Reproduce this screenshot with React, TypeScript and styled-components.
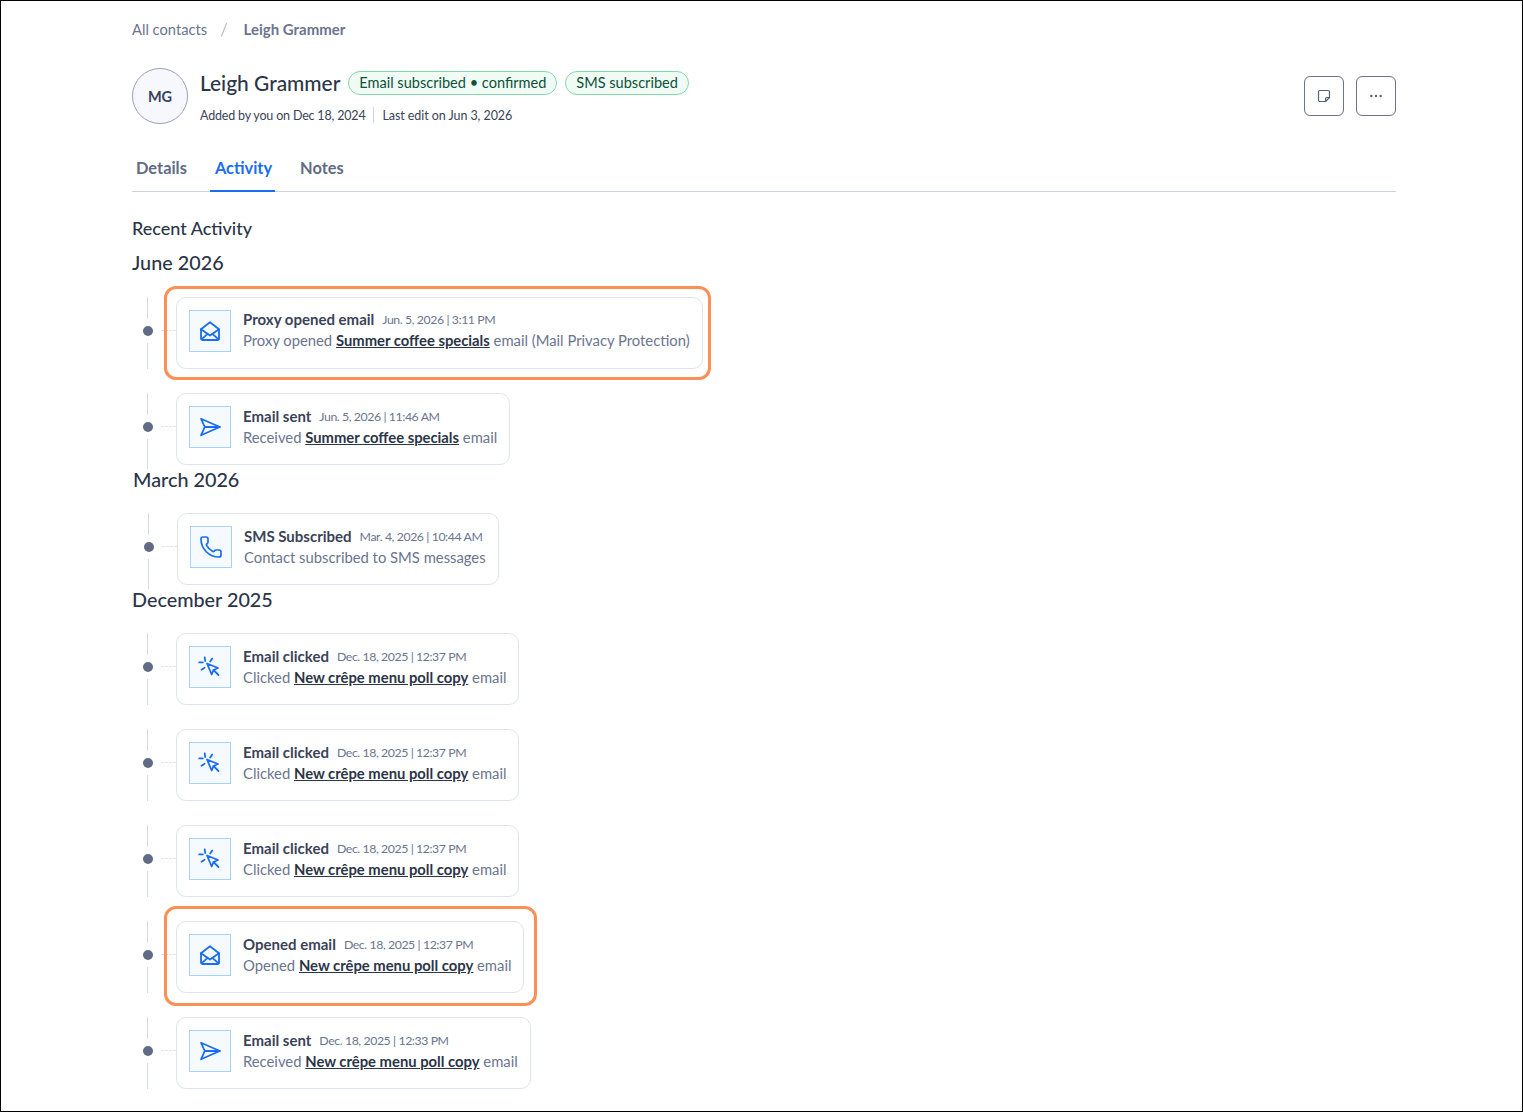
import React from "react";
import styled, { createGlobalStyle } from "styled-components";
import { Phone, Ellipsis } from "lucide-react";

const Global = createGlobalStyle`
  html, body { margin: 0; padding: 0; background: #fff; }
  * { box-sizing: border-box; }
  body { font-family: "Lato", "Liberation Sans", sans-serif; }
`;

const Page = styled.div`
  width: 1523px;
  height: 1112px;
  border: 1px solid #000;
  padding: 0 126px 0 131px;
  overflow: hidden;
  color: #2b3548;
`;

const Crumbs = styled.nav`
  display: flex;
  align-items: center;
  height: 30px;
  margin-top: 13px;
  font-size: 14.7px;
  color: #6b7490;
`;
const CrumbSep = styled.span`
  margin: 0 16px 0 13px;
  font-size: 17px;
  font-weight: 300;
  color: #8a91a8;
`;
const CrumbCurrent = styled.span`
  font-size: 15px;
  font-weight: 700;
`;

const Header = styled.header`
  display: flex;
  align-items: center;
  margin-top: 24px;
  height: 56px;
`;
const Avatar = styled.div`
  width: 56px;
  height: 56px;
  border-radius: 50%;
  border: 1px solid #99a1b8;
  background: #f6f8fd;
  display: flex;
  align-items: center;
  justify-content: center;
  font-size: 14.5px;
  font-weight: 700;
  color: #38425a;
`;
const HeaderText = styled.div`
  margin-left: 12px;
  flex: 1;
`;
const NameRow = styled.div`
  display: flex;
  align-items: center;
  gap: 8px;
`;
const Name = styled.h1`
  margin: 0;
  font-size: 20.9px;
  font-weight: 500;
  line-height: 28px;
  color: #2b3548;
`;
const Badge = styled.span`
  display: inline-flex;
  align-items: center;
  height: 24px;
  padding: 0 10px 1px;
  border: 1px solid #7fdca8;
  border-radius: 12px;
  background: #effbf4;
  font-size: 14.55px;
  color: #0d5238;
`;
const Meta = styled.div`
  display: flex;
  align-items: center;
  margin-top: 10px;
  font-size: 12.5px;
  letter-spacing: -0.18px;
  color: #3a4358;
`;
const MetaLast = styled.span`
  letter-spacing: -0.07px;
`;
const MetaDivider = styled.span`
  width: 1px;
  height: 16px;
  background: #cfd4e0;
  margin: 0 8px;
`;
const Actions = styled.div`
  display: flex;
  gap: 12px;
`;
const IconButton = styled.button`
  width: 40px;
  height: 40px;
  border-radius: 6px;
  border: 1px solid #6b7490;
  background: #fff;
  color: #56607a;
  display: flex;
  align-items: center;
  justify-content: center;
  padding: 0;
`;

const Tabs = styled.div`
  display: flex;
  margin-top: 28px;
  height: 40px;
  border-bottom: 1px solid #ccd1dc;
`;
const Tab = styled.div<{ $active?: boolean }>`
  padding: 3px 4px 0;
  height: 40px;
  font-size: 16.4px;
  line-height: 26px;
  font-weight: 700;
  color: ${(p) => (p.$active ? "#1a6cf0" : "#626b84")};
  border-bottom: 2px solid ${(p) => (p.$active ? "#1a6cf0" : "transparent")};
  &:first-child { margin-right: 19px; }
  &:nth-child(2) { padding: 3px 3px 0 5px; margin-right: 21px; }
`;

const SectionTitle = styled.h2`
  margin: 21px 0 0;
  font-size: 18px;
  line-height: 30px;
  font-weight: 500;
  color: #2b3548;
`;
const Month = styled.h3<{ $nudge?: boolean; $first?: boolean }>`
  margin: ${(p) => (p.$first ? "4px" : "-1px")} 0 ${(p) => (p.$first ? "20px" : "19px")} ${(p) => (p.$nudge ? "1px" : "0")};
  font-size: 19.8px;
  line-height: 30px;
  font-weight: 500;
  color: #2b3548;
`;

const Group = styled.div<{ $nudge?: boolean }>`
  margin-left: ${(p) => (p.$nudge ? "1px" : "0")};
`;
const Row = styled.div<{ $last?: boolean }>`
  display: flex;
  align-items: flex-start;
  padding-bottom: ${(p) => (p.$last ? 0 : 24)}px;
`;
const Rail = styled.div<{ $last?: boolean; $tail?: boolean }>`
  position: relative;
  align-self: stretch;
  width: 44px;
  flex: none;
  &::before {
    content: "";
    position: absolute;
    left: 15px;
    width: 1px;
    top: 0;
    bottom: ${(p) => (p.$last && p.$tail ? -4 : 0)}px;
    background: #d5d9e5;
  }
`;
const Node = styled.span`
  position: absolute;
  left: 11px;
  top: 29px;
  width: 10px;
  height: 10px;
  border-radius: 50%;
  background: #626b84;
  box-shadow: 0 0 0 7px #fff;
`;
const Connector = styled.span`
  position: absolute;
  left: 29px;
  top: 33px;
  width: 15px;
  border-top: 1px dashed #dfe3f0;
`;
const Card = styled.div`
  position: relative;
  display: flex;
  align-items: flex-start;
  height: 72px;
  padding: 12px 12px 0;
  border: 1px solid #dfe3ee;
  border-radius: 10px;
  background: #fff;
`;
const Highlight = styled.span<{ $tall?: boolean }>`
  position: absolute;
  top: ${(p) => (p.$tall ? -16 : -12)}px;
  left: -13px;
  right: ${(p) => (p.$tall ? -14 : -9)}px;
  bottom: ${(p) => (p.$tall ? -14 : -12)}px;
  border: 3px solid #fb9057;
  border-radius: 12px;
  pointer-events: none;
`;
const IconTile = styled.div`
  width: 42px;
  height: 42px;
  flex: none;
  border: 1px solid #a9d0fa;
  background: #f5faff;
  color: #1a6cf0;
  display: flex;
  align-items: center;
  justify-content: center;
`;
const Body = styled.div<{ $raise?: boolean }>`
  margin: ${(p) => (p.$raise ? "-1px" : "0")} 0 0 12px;
`;
const TitleLine = styled.div`
  display: flex;
  align-items: center;
  gap: 8px;
  height: 21px;
  line-height: 21px;
  white-space: nowrap;
`;
const Title = styled.span`
  font-size: 15px;
  font-weight: 700;
  color: #3a4358;
`;
const Stamp = styled.span`
  font-size: 12.3px;
  letter-spacing: -0.42px;
  color: #6b7490;
`;
const Detail = styled.div`
  font-size: 14.8px;
  line-height: 20px;
  color: #6b7490;
  white-space: nowrap;
`;
const Linked = styled.a`
  font-weight: 700;
  color: #2b3548;
  text-decoration: underline;
`;

const MailGlyph = () => (
  <svg width="24" height="24" viewBox="0 0 24 24" fill="none" stroke="currentColor" strokeWidth="1.8" strokeLinejoin="round" strokeLinecap="round">
    <path d="M3 10.2 12 3.2l9 7V19a2 2 0 0 1-2 2H5a2 2 0 0 1-2-2z" />
    <path d="M3 10.2l9 6.3 9-6.3" />
    <path d="M3.4 20.3l6.2-5.5M20.6 20.3l-6.2-5.5" />
  </svg>
);
const SendGlyph = () => (
  <svg width="24" height="24" viewBox="0 0 24 24" fill="none" stroke="currentColor" strokeWidth="1.8" strokeLinejoin="round" strokeLinecap="round">
    <path d="M3 3.7 21.8 12 3 20.3 6.8 12z" />
    <path d="M6.8 12h15" />
  </svg>
);
const ClickGlyph = () => (
  <svg width="24" height="24" viewBox="0 0 24 24" fill="none" stroke="currentColor" strokeWidth="1.8" strokeLinejoin="round" strokeLinecap="round">
    <path d="M9 8.5 20 13l-4.5 2-1.8 4.5z" />
    <path d="M15.5 15l5 5" />
    <path d="M6.7 2.5 7.2 6M1.2 7.4h3.6M3.5 14.8 6.6 12.8M14.2 3.4 12.2 6.6" />
  </svg>
);
const NoteGlyph = () => (
  <svg width="14" height="14" viewBox="0 0 14 14" fill="none" stroke="currentColor" strokeWidth="1.2" strokeLinejoin="round" strokeLinecap="round">
    <path d="M3 1.5h8a1.5 1.5 0 0 1 1.5 1.5v5.5l-4 4H3A1.5 1.5 0 0 1 1.5 11V3A1.5 1.5 0 0 1 3 1.5z" />
    <path d="M12.5 8.5H10A1.5 1.5 0 0 0 8.5 10v2.5" />
  </svg>
);

type Kind = "mail" | "send" | "phone" | "click";
const icon = (k: Kind) => {
  if (k === "mail") return <MailGlyph />;
  if (k === "send") return <SendGlyph />;
  if (k === "phone") return <Phone size={24} strokeWidth={1.7} />;
  return <ClickGlyph />;
};

type Item = { kind: Kind; title: string; stamp: string; pre: string; link?: string; post?: string; hl?: "short" | "tall" };
type MonthData = { month: string; nudge?: boolean; tail?: boolean; items: Item[] };

const crepe = "New crêpe menu poll copy";
const coffee = "Summer coffee specials";
const clicked: Item = { kind: "click", title: "Email clicked", stamp: "Dec. 18, 2025 | 12:37 PM", pre: "Clicked ", link: crepe, post: " email" };

const months: MonthData[] = [
  {
    month: "June 2026",
    tail: true,
    items: [
      { kind: "mail", title: "Proxy opened email", stamp: "Jun. 5, 2026 | 3:11 PM", pre: "Proxy opened ", link: coffee, post: " email (Mail Privacy Protection)", hl: "short" },
      { kind: "send", title: "Email sent", stamp: "Jun. 5, 2026 | 11:46 AM", pre: "Received ", link: coffee, post: " email" },
    ],
  },
  {
    month: "March 2026",
    nudge: true,
    tail: true,
    items: [{ kind: "phone", title: "SMS Subscribed", stamp: "Mar. 4, 2026 | 10:44 AM", pre: "Contact subscribed to SMS messages" }],
  },
  {
    month: "December 2025",
    items: [
      clicked,
      clicked,
      clicked,
      { kind: "mail", title: "Opened email", stamp: "Dec. 18, 2025 | 12:37 PM", pre: "Opened ", link: crepe, post: " email", hl: "tall" },
      { kind: "send", title: "Email sent", stamp: "Dec. 18, 2025 | 12:33 PM", pre: "Received ", link: crepe, post: " email" },
    ],
  },
];

export default function App() {
  return (
    <Page>
      <Global />
      <Crumbs>
        <span>All contacts</span>
        <CrumbSep>/</CrumbSep>
        <CrumbCurrent>Leigh Grammer</CrumbCurrent>
      </Crumbs>
      <Header>
        <Avatar>MG</Avatar>
        <HeaderText>
          <NameRow>
            <Name>Leigh Grammer</Name>
            <Badge>Email subscribed • confirmed</Badge>
            <Badge>SMS subscribed</Badge>
          </NameRow>
          <Meta>
            <span>Added by you on Dec 18, 2024</span>
            <MetaDivider />
            <MetaLast>Last edit on Jun 3, 2026</MetaLast>
          </Meta>
        </HeaderText>
        <Actions>
          <IconButton aria-label="Note">
            <NoteGlyph />
          </IconButton>
          <IconButton aria-label="More">
            <Ellipsis size={16} strokeWidth={1.6} />
          </IconButton>
        </Actions>
      </Header>
      <Tabs>
        <Tab>Details</Tab>
        <Tab $active>Activity</Tab>
        <Tab>Notes</Tab>
      </Tabs>
      <SectionTitle>Recent Activity</SectionTitle>
      {months.map((m, mi) => (
        <React.Fragment key={m.month}>
          <Month $nudge={m.nudge} $first={mi === 0}>{m.month}</Month>
          <Group $nudge={m.nudge}>
            {m.items.map((it, i) => {
              const last = i === m.items.length - 1;
              return (
                <Row key={i} $last={last}>
                  <Rail $last={last} $tail={m.tail}>
                    <Node />
                    <Connector />
                  </Rail>
                  <Card>
                    {it.hl && <Highlight $tall={it.hl === "tall"} />}
                    <IconTile>{icon(it.kind)}</IconTile>
                    <Body $raise={it.hl === "short"}>
                      <TitleLine>
                        <Title>{it.title}</Title>
                        <Stamp>{it.stamp}</Stamp>
                      </TitleLine>
                      <Detail>
                        {it.pre}
                        {it.link && <Linked>{it.link}</Linked>}
                        {it.post}
                      </Detail>
                    </Body>
                  </Card>
                </Row>
              );
            })}
          </Group>
        </React.Fragment>
      ))}
    </Page>
  );
}
